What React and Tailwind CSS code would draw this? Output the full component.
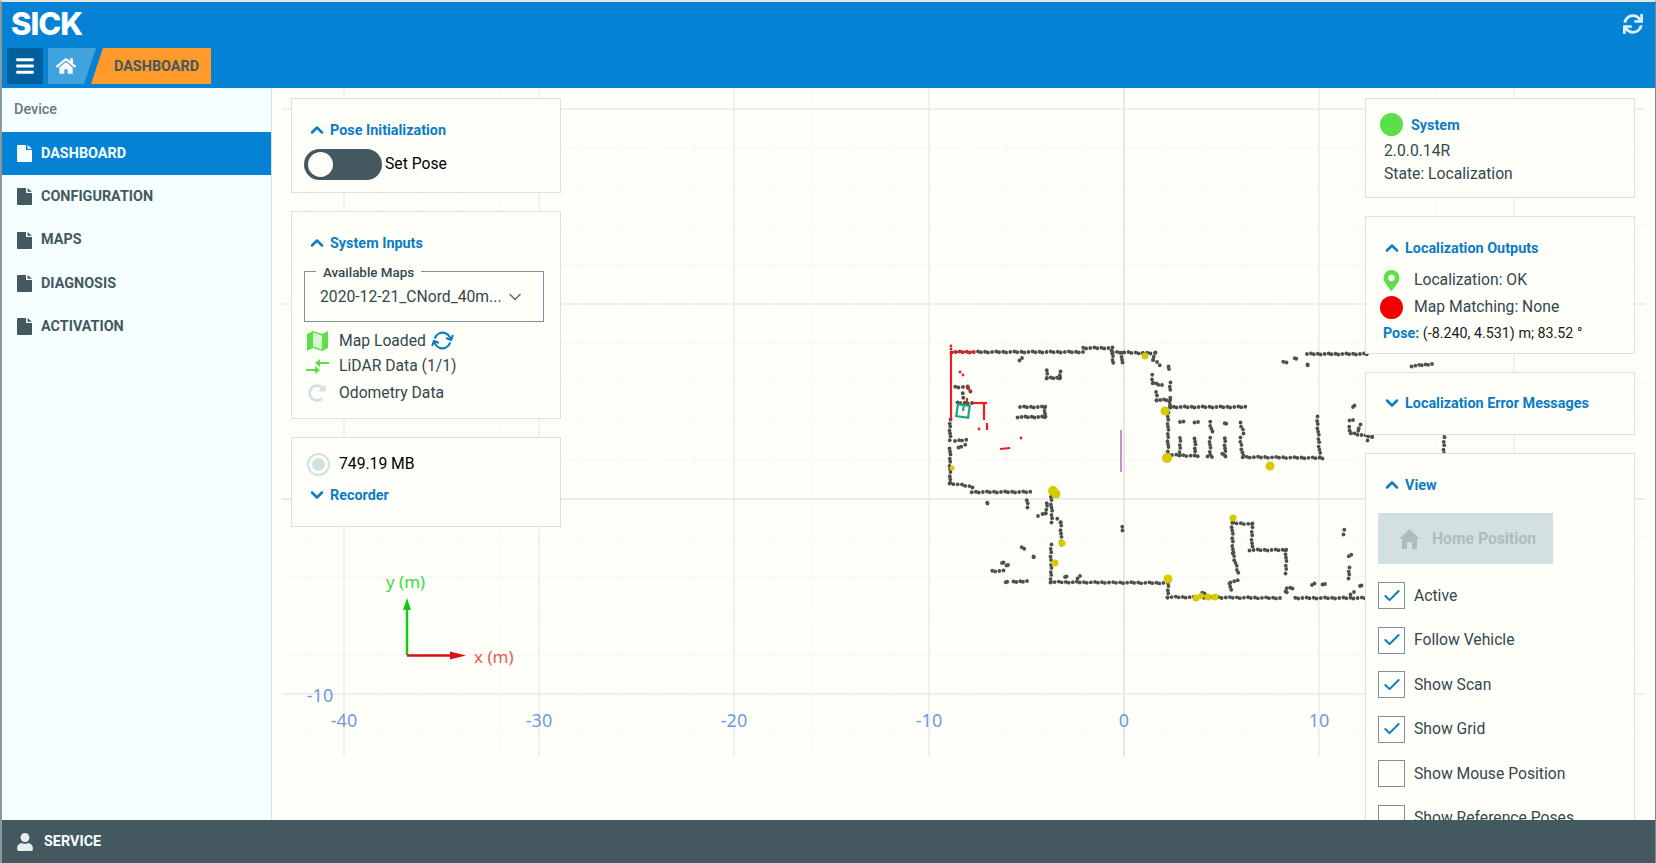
import React from "react";
import { FaBars, FaHome, FaSync, FaUser, FaMapMarkerAlt, FaRedoAlt } from "react-icons/fa";
import { ChevronUp, ChevronDown, Check, RefreshCw } from "lucide-react";

const dark = [
  [[952,352],[1083,352]],[[1083,348],[1112,348]],[[1113,352],[1143,353]],[[950,420],[950,440]],[[955,441],[966,440]],
  [[950,448],[950,483]],[[950,483],[973,487]],[[972,492],[1030,492]],[[958,448],[965,445]],
  [[1020,407],[1045,407]],[[1018,417],[1045,417]],[[1045,407],[1045,417]],[[1047,370],[1047,378]],[[1060,372],[1060,378]],[[1047,378],[1060,378]],[[1020,360],[1022,358]],
  [[955,387],[967,387]],[[963,393],[963,398]],[[957,403],[972,403]],[[968,388],[970,392]],
  [[1112,350],[1113,363]],[[1122,353],[1122,363]],[[1143,353],[1155,353]],[[1155,353],[1153,360]],[[1153,360],[1160,365]],[[1169,366],[1169,369]],
  [[1152,375],[1153,383]],[[1153,383],[1162,385]],[[1170,383],[1170,390]],[[1156,392],[1157,400]],[[1157,400],[1170,400]],
  [[1170,398],[1170,408]],[[1170,407],[1245,407]],[[1168,413],[1168,458]],[[1180,422],[1183,422]],[[1195,422],[1198,422]],[[1210,422],[1212,432]],[[1225,423],[1226,424]],[[1240,423],[1244,433]],
  [[1180,438],[1180,455]],[[1195,438],[1195,455]],[[1210,438],[1210,455]],[[1225,438],[1225,455]],[[1240,438],[1243,456]],[[1172,455],[1198,456]],[[1208,456],[1212,457]],[[1222,454],[1226,456]],
  [[1243,457],[1323,458]],[[1317,417],[1320,457]],[[1307,354],[1367,354]],[[1412,366],[1432,364]],[[1283,362],[1287,362]],[[1295,358],[1296,359]],[[1307,365],[1308,365]],
  [[1353,407],[1354,406]],[[1350,420],[1353,420]],[[1349,427],[1351,433]],[[1351,433],[1372,437]],[[1360,425],[1358,431]],[[1444,434],[1444,453]],[[1368,440],[1372,437]],
  [[1232,523],[1233,553]],[[1233,553],[1238,573]],[[1233,523],[1252,524]],[[1252,524],[1252,547]],[[1250,550],[1286,550]],[[1286,550],[1286,573]],
  [[1238,580],[1230,583]],[[1230,583],[1231,590]],[[1168,583],[1168,597]],[[1168,597],[1280,598]],[[1295,598],[1365,598]],[[1287,588],[1293,588]],[[1285,592],[1287,592]],
  [[1312,585],[1314,584]],[[1323,584],[1325,584]],[[1344,530],[1344,534]],[[1349,556],[1351,555]],[[1349,568],[1349,578]],[[1360,586],[1361,586]],[[1351,594],[1354,592]],
  [[987,503],[988,503]],[[1027,500],[1028,507]],[[1051,493],[1052,522]],[[1038,516],[1046,513]],[[1046,513],[1047,503]],[[1057,519],[1061,522]],[[1061,522],[1061,545]],
  [[1051,545],[1051,560]],[[1051,565],[1051,582]],[[1051,582],[1167,583]],[[1122,527],[1123,530]],[[1022,547],[1024,549]],[[1033,557],[1034,557]],[[1002,563],[1003,563]],[[1007,565],[1008,565]],
  [[992,571],[1003,571]],[[1006,582],[1007,582]],[[1013,582],[1027,581]],[[1065,577],[1066,577]],[[1078,578],[1080,576]],[[1202,593],[1205,593]],
];

const yellow = [[1053,491,5],[1056,494,4.5],[1145,356,3.5],[1165,411,4.5],[1167,458,5],[1270,466,4.5],[1233,518,3.5],[1168,579,4.5],[1196,598,3.5],[1201,596,3],[1208,597,3.5],[1215,597,3.5],[952,468,2.5],[1062,543,3.5],[1055,563,3.5]];

const red = [[[952,352],[975,352]],[[951,352],[951,420]],[[973,403],[987,403]],[[984,403],[984,420]],[[987,423],[987,430]],[[968,385],[970,392]],[[967,398],[967,403]],[[1000,449],[1010,448]]];
const redDots = [[979,429],[1021,438],[960,372],[963,375],[951,346],[951,349]];

function dots(segs) {
  const out = [];
  segs.forEach(([a, b], i) => {
    const d = Math.hypot(b[0] - a[0], b[1] - a[1]);
    const n = Math.max(1, Math.round(d / 3.6));
    for (let k = 0; k <= n; k++) {
      const t = k / n;
      const j = ((k * 7 + i * 3) % 5 - 2) * 0.25;
      out.push([a[0] + (b[0] - a[0]) * t + j, a[1] + (b[1] - a[1]) * t - j]);
    }
  });
  return out;
}

const majorX = [344, 539, 734, 929, 1124, 1319, 1514];
const majorY = [109, 304, 499, 694];
const minorX = Array.from({ length: 35 }, (_, i) => 305 + i * 39);
const minorY = Array.from({ length: 17 }, (_, i) => 109 + i * 39);

function MapCanvas() {
  const font = { fontFamily: "'Noto Sans', sans-serif" };
  return (
    <svg className="absolute left-0 top-0" width="1382" height="732" viewBox="272 88 1382 732">
      {minorX.map((x) => <line key={x} x1={x} x2={x} y1="88" y2="757" stroke="#fbfaf5" strokeWidth="1.5" />)}
      {minorY.map((y) => <line key={y} x1="282" x2="1645" y1={y} y2={y} stroke="#fbf8f6" strokeWidth="1.5" />)}
      {majorX.map((x) => <line key={x} x1={x} x2={x} y1="88" y2="757" stroke={x === 1124 ? "#dcdcd8" : "#ebebe5"} strokeWidth="1.3" />)}
      {majorY.map((y) => <line key={y} x1="282" x2="1645" y1={y} y2={y} stroke={y === 499 ? "#f0dfe8" : "#eeebe7"} strokeWidth="1.3" />)}
      <line x1="1121" x2="1121" y1="430" y2="472" stroke="#c46cc4" strokeWidth="1.6" />
      {dots(dark).map(([x, y], i) => <circle key={i} cx={x} cy={y} r="1.9" fill="#4d514c" />)}
      {red.map(([a, b], i) => <line key={i} x1={a[0]} y1={a[1]} x2={b[0]} y2={b[1]} stroke="#ee1c25" strokeWidth="2.2" />)}
      {redDots.map(([x, y], i) => <circle key={i} cx={x} cy={y} r="1.4" fill="#ee1c25" />)}
      {yellow.map(([x, y, r], i) => <circle key={i} cx={x} cy={y} r={r} fill="#d6ca00" />)}
      <g transform="rotate(8 963 411)" fill="none" stroke="#1fa37f" strokeWidth="2.2">
        <rect x="957" y="405" width="12" height="12" />
        <path d="M963 411v-5" />
      </g>
      <line x1="407" x2="407" y1="655" y2="605" stroke="#14c814" strokeWidth="2.5" />
      <path d="M403 610 407 598 411 610Z" fill="#14c814" />
      <line x1="407" x2="452" y1="655.5" y2="655.5" stroke="#d01010" strokeWidth="2.5" />
      <path d="M450 651.5 466 655.5 450 659.5Z" fill="#e01010" />
      <text x="386" y="588" fontSize="17" fill="#3bdc3b" style={font}>y (m)</text>
      <text x="474" y="663" fontSize="17" fill="#ea5a5a" style={font}>x (m)</text>
      <g fill="#6f9ae0" fontSize="18" style={font} textAnchor="middle">
        <text x="320" y="702">-10</text>
        <text x="344" y="727">-40</text>
        <text x="539" y="727">-30</text>
        <text x="734" y="727">-20</text>
        <text x="929" y="727">-10</text>
        <text x="1124" y="727">0</text>
        <text x="1319" y="727">10</text>
      </g>
    </svg>
  );
}

function Card({ className = "", children }) {
  return <div className={"relative w-[270px] shrink-0 border border-[#dfe0d9] bg-[#fffff9] " + className}>{children}</div>;
}

function Section({ open, title, className = "" }) {
  const Icon = open ? ChevronUp : ChevronDown;
  return (
    <div className={"flex items-center gap-[3px] text-[14.4px] font-bold leading-5 text-[#0a7cc4] " + className}>
      <Icon size={20} strokeWidth={3} className="text-[#0a7cc4]" />
      <span className="relative top-[1px]">{title}</span>
    </div>
  );
}

function FileIcon() {
  return (
    <svg width="15" height="17" viewBox="0 0 15 17" fill="currentColor">
      <path d="M0 1a1 1 0 0 1 1-1h8v5h6v11a1 1 0 0 1-1 1H1a1 1 0 0 1-1-1z" />
      <path d="M10.500 0 15 3.700H10.500z" />
    </svg>
  );
}

function NavItem({ label, active }) {
  return (
    <div className={"flex h-[43.3px] items-center gap-[9px] pl-[15px] text-[14.4px] font-bold " + (active ? "bg-[#0582d4] text-[#f5ffff]" : "text-[#44585f]")}>
      <FileIcon />
      <span>{label}</span>
    </div>
  );
}

function Checkbox({ label, checked }) {
  return (
    <div className="flex h-[27px] shrink-0 items-center gap-[9px] text-[15.7px] text-[#33474e]">
      <div className="flex h-[27px] w-[27px] items-center justify-center border border-[#7c9299]">
        {checked && <Check size={20} strokeWidth={2.4} className="text-[#0a7cc4]" />}
      </div>
      <span>{label}</span>
    </div>
  );
}

function LidarIcon() {
  return (
    <svg width="23" height="15" viewBox="0 0 23 15" fill="#5ce04a">
      <path d="M23 3H14V0L9 4l5 4V5h9z" />
      <path d="M0 10h9V7l5 4-5 4v-3H0z" />
    </svg>
  );
}

function MapIcon() {
  return (
    <svg width="21" height="20" viewBox="0 0 21 20">
      <path d="M0 3 6 0v17l-6 3z" fill="#5ce04a" />
      <path d="M15 3l6-3v17l-6 3z" fill="#5ce04a" />
      <path d="M6 0l9 3v17l-9-3z" fill="#d9f6d2" />
      <path d="M6 0l9 3v1.500L6 1.500zM6 15.500l9 3V20l-9-3z" fill="#5ce04a" />
    </svg>
  );
}

function PlainHome() {
  return (
    <svg width="21" height="20" viewBox="0 0 21 20" fill="currentColor">
      <path d="M10.500 0 21 10h-3v10h-5v-7H8v7H3V10H0z" />
    </svg>
  );
}

export default function App() {
  return (
    <div className="flex h-[863px] w-[1656px] flex-col overflow-hidden border-t-2 border-l-2 border-r border-t-[#e4e6e6] border-l-[#8a9a9c] border-r-[#7a8a8c] bg-white" style={{ fontFamily: "Roboto, sans-serif" }}>
      <header className="relative h-[86px] shrink-0 bg-[#0582d4]">
        <div className="pl-[9px] pt-[4px] text-[31px] font-extrabold leading-[36px] tracking-[-1px] text-white" style={{ fontFamily: "Inter, sans-serif" }}>SICK</div>
        <FaSync size={20} className="absolute right-[12px] top-[12px] text-[#d8f0ff]" />
        <div className="absolute left-[5px] top-[46px] flex h-[36px] items-stretch">
          <div className="flex w-[36px] items-center justify-center bg-[#00609e] text-white"><FaBars size={20} /></div>
          <div className="ml-[5px] flex w-[48px] items-center bg-[#41a3dd] pl-[8px] text-white [clip-path:polygon(0_0,100%_0,75%_100%,0_100%)]"><FaHome size={20} /></div>
          <div className="-ml-[5px] flex w-[120px] items-center bg-[#ff9a2b] pl-[23px] pt-[2px] text-[14.4px] font-bold text-[#44585f] [clip-path:polygon(12px_0,100%_0,100%_100%,0_100%)]">DASHBOARD</div>
        </div>
      </header>
      <div className="flex min-h-0 flex-1">
        <aside className="w-[270px] shrink-0 border-r border-r-[#d5e3e6] bg-[#f5ffff]">
          <div className="flex h-[44px] items-center pl-[12px] text-[14.4px] font-medium text-[#6b7780]">Device</div>
          <NavItem label="DASHBOARD" active />
          <NavItem label="CONFIGURATION" />
          <NavItem label="MAPS" />
          <NavItem label="DIAGNOSIS" />
          <NavItem label="ACTIVATION" />
        </aside>
        <main className="relative min-w-0 flex-1 overflow-hidden bg-[#fffff9]">
          <MapCanvas />
          <div className="relative flex h-full items-start justify-between pl-[19px] pr-[20px] pt-[10px]">
            <div className="flex w-[270px] flex-col gap-[18px]">
              <Card className="h-[95px] px-[15px] pt-[21px]">
                <Section open title="Pose Initialization" />
                <div className="mt-[9px] -ml-[3px] flex items-center gap-[3px]">
                  <div className="flex h-[31px] w-[78px] items-center rounded-full bg-[#44585f] pl-[4px]">
                    <div className="h-[25px] w-[25px] rounded-full bg-[#fffff9]" />
                  </div>
                  <span className="mb-[2px] text-[15.7px] text-black">Set Pose</span>
                </div>
              </Card>
              <Card className="h-[208px] px-[12px] pt-[21px]">
                <Section open title="System Inputs" className="pl-[3px]" />
                <div className="relative mt-[18px] flex h-[51px] w-[240px] items-center justify-between border border-[#7c9299] pb-[1px] pl-[15px] pr-[18px] text-[15.7px] text-[#33474e]">
                  <span className="absolute -top-[7px] left-[11px] bg-[#fffff9] px-[7px] text-[13.4px] font-medium leading-4 text-[#33474e]">Available Maps</span>
                  <span className="mt-[1px] whitespace-nowrap">2020-12-21_CNord_40m...</span>
                  <ChevronDown size={20} strokeWidth={2} className="mt-[1px] text-[#5e7480]" />
                </div>
                <div className="mt-[5px] flex h-[27px] items-center text-[15.7px] text-[#33474e]">
                  <span className="flex w-[35px] justify-start pl-[3px]"><MapIcon /></span>
                  <span>Map Loaded</span>
                  <RefreshCw size={21} strokeWidth={2.4} className="ml-[6px] rotate-[20deg] text-[#0a7cc4]" />
                </div>
                <div className="flex h-[24px] items-center text-[15.7px] text-[#33474e]">
                  <span className="flex w-[35px] justify-start pl-[2px]"><LidarIcon /></span>
                  <span>LiDAR Data (1/1)</span>
                </div>
                <div className="mt-[1px] flex h-[27px] items-center text-[15.7px] text-[#33474e]">
                  <span className="flex w-[35px] justify-start pl-[4px]"><FaRedoAlt size={18} className="text-[#d3e0e0]" /></span>
                  <span>Odometry Data</span>
                </div>
              </Card>
              <Card className="h-[90px] px-[15px] pt-[14px]">
                <div className="flex h-[24px] items-center text-[15.7px] text-black">
                  <span className="flex h-[23px] w-[23px] items-center justify-center rounded-full border-[2.5px] border-[#d3e0e0]">
                    <span className="h-[13px] w-[13px] rounded-full bg-[#d3e0e0]" />
                  </span>
                  <span className="ml-[9px]">749.19 MB</span>
                </div>
                <Section title="Recorder" className="mt-[9px]" />
              </Card>
            </div>
            <div className="flex w-[270px] flex-col gap-[18px]">
              <Card className="h-[100px] pl-[14px] pt-[14px] text-[15.7px] text-[#33474e]">
                <div className="flex items-center gap-[8px]">
                  <span className="h-[23px] w-[23px] rounded-full bg-[#5ce04a]" />
                  <span className="relative top-[1px] text-[14.4px] font-bold leading-5 text-[#0a7cc4]">System</span>
                </div>
                <div className="ml-[4px] mt-[3px] leading-6">2.0.0.14R</div>
                <div className="ml-[4px] mt-[-1px] leading-[23px]">State: Localization</div>
              </Card>
              <Card className="h-[138px] px-[16px] pt-[21px]">
                <Section open title="Localization Outputs" />
                <div className="mt-[9px] -ml-[2px] flex h-[26px] items-center gap-[11px] text-[15.7px] text-[#33474e]">
                  <span className="flex w-[23px] justify-center"><FaMapMarkerAlt size={21} className="text-[#5ce04a]" /></span>
                  <span>Localization: OK</span>
                </div>
                <div className="mt-[1px] -ml-[2px] flex h-[26px] items-center gap-[11px] text-[15.7px] text-[#33474e]">
                  <span className="h-[23px] w-[23px] rounded-full bg-[#f00000]" />
                  <span>Map Matching: None</span>
                </div>
                <div className="ml-[1px] mt-[3px] text-[14.3px] leading-5 text-[#1a1a1a]">
                  <span className="font-bold text-[#0a7cc4]">Pose:</span> (-8.240, 4.531) m; 83.52 °
                </div>
              </Card>
              <Card className="h-[63px] px-[16px] pt-[20px]">
                <Section title="Localization Error Messages" />
              </Card>
              <Card className="h-[500px] px-[12px] pt-[21px]">
                <Section open title="View" className="pl-[4px]" />
                <div className="mt-[18px] flex h-[51px] w-[175px] items-center gap-[12px] bg-[#d3e0e0] pl-[21px] text-[15.7px] font-bold text-[#aebcbc]">
                  <PlainHome />
                  <span>Home Position</span>
                </div>
                <div className="mt-[18px] flex flex-col gap-[17.5px]">
                  <Checkbox label="Active" checked />
                  <Checkbox label="Follow Vehicle" checked />
                  <Checkbox label="Show Scan" checked />
                  <Checkbox label="Show Grid" checked />
                  <Checkbox label="Show Mouse Position" />
                  <Checkbox label="Show Reference Poses" />
                </div>
              </Card>
            </div>
          </div>
        </main>
      </div>
      <footer className="flex h-[43px] shrink-0 items-center gap-[10px] bg-[#44585f] pl-[14px] text-[14.4px] font-bold text-[#f5ffff]">
        <FaUser size={18} className="text-[#e8eeee]" />
        <span>SERVICE</span>
      </footer>
    </div>
  );
}
